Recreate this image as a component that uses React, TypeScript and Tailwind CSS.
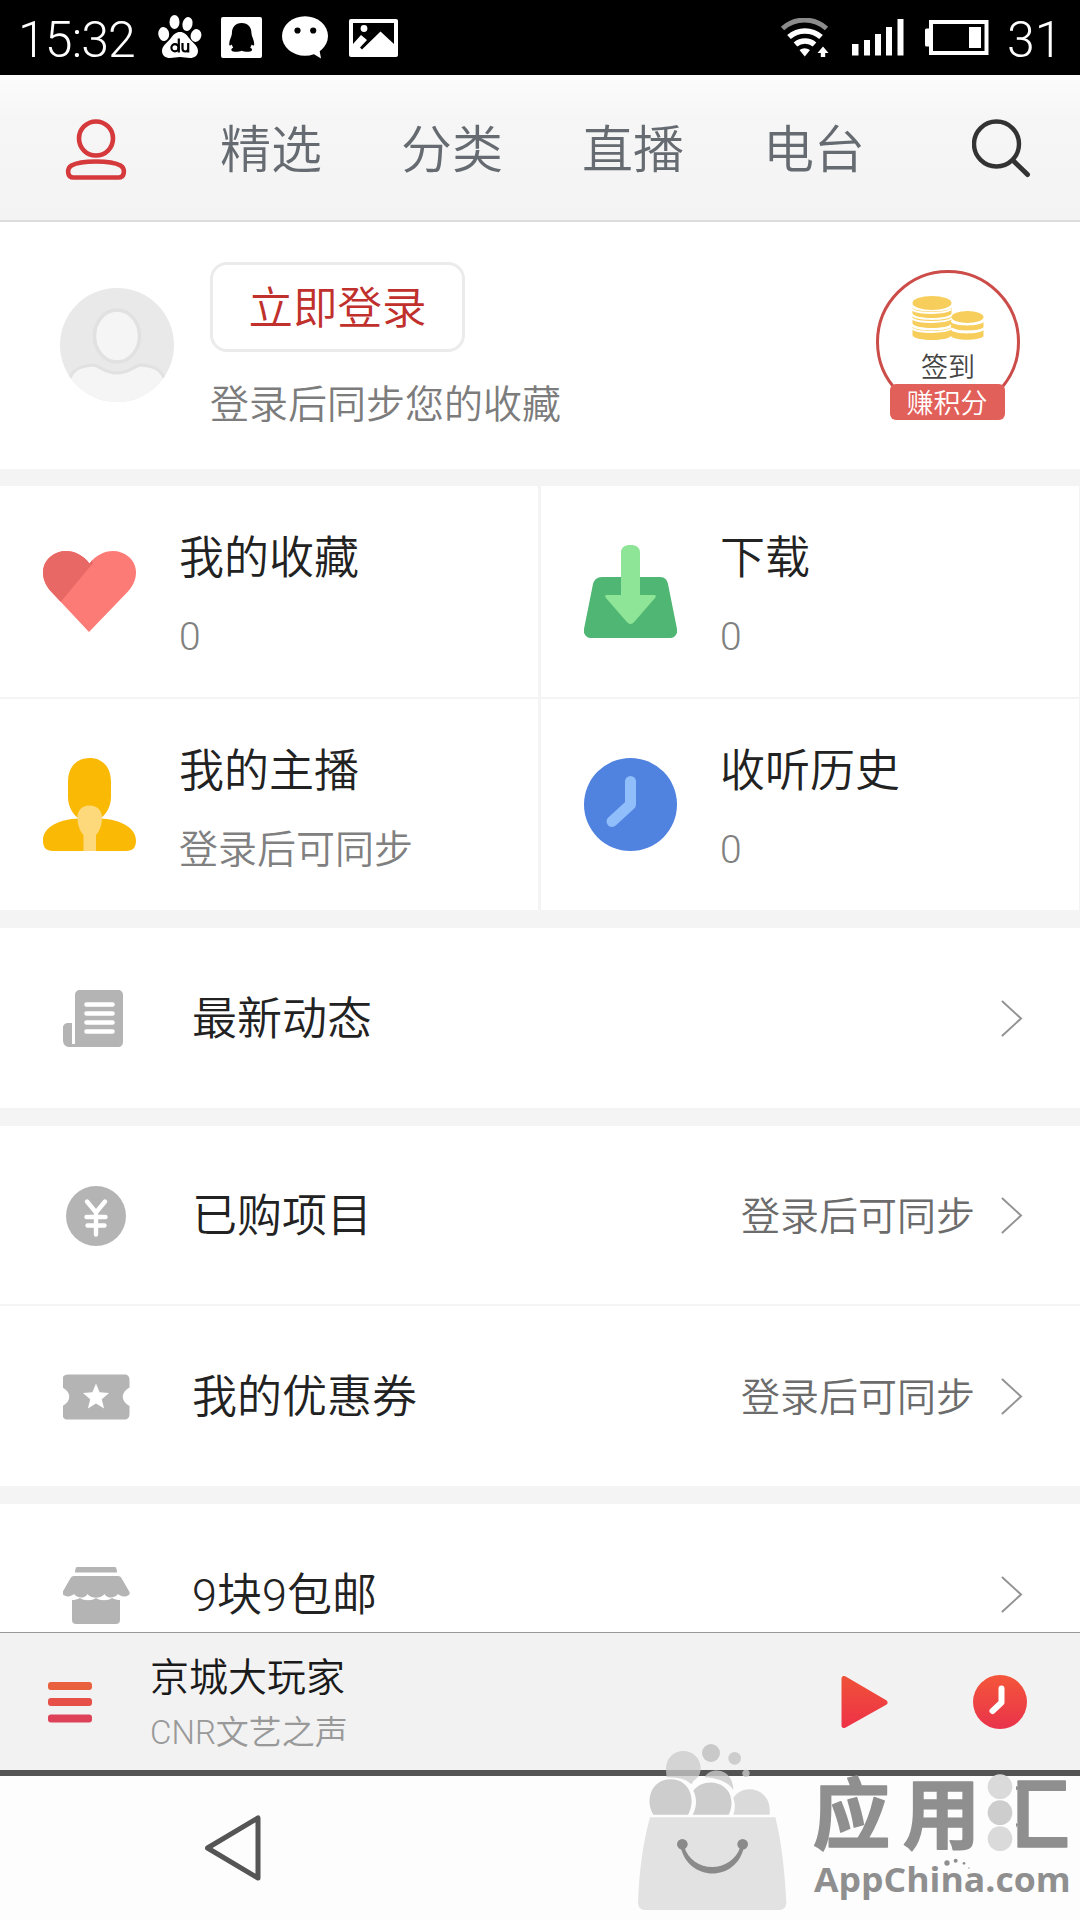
import React from "react";

const FONT = "font-['Roboto','Noto_Sans_CJK_SC',sans-serif]";

type IconProps = { box: string; className?: string; children: React.ReactNode };

/* Icon frame: the view box also gives the drawn size in pixels. */
function Icon({ box, className = "", children }: IconProps) {
  const [, , w, h] = box.split(" ");
  return (
    <svg viewBox={box} width={w} height={h} fill="none" className={`block shrink-0 ${className}`}>
      {children}
    </svg>
  );
}

function StatusBar() {
  return (
    <div className="flex h-[75px] shrink-0 items-start bg-black text-white">
      <span className="ml-[18px] mt-[15px] w-[130px] text-[50px] font-light leading-[50px] tracking-[-0.9px]">15:32</span>
      <Icon box="158 14 44 46" className="ml-[10px] mt-[14px]">
        <g fill="#fff">
          <ellipse cx="163.700" cy="34" rx="5.400" ry="7" transform="rotate(-8 163.700 34)" />
          <ellipse cx="174.500" cy="22" rx="5" ry="7" />
          <ellipse cx="187.500" cy="24" rx="5" ry="7" transform="rotate(14 187.500 24)" />
          <ellipse cx="196" cy="35.500" rx="5.300" ry="6.500" transform="rotate(14 196 35.500)" />
          <path d="M180 32c4 0 6.500 2.500 9 6 3 4 9 7.500 9 13 0 4.500-3.500 7-8 7-4 0-6-1-10-1s-6 1-10 1c-4.500 0-8-2.500-8-7 0-5.500 6-9 9-13 2.500-3.500 5-6 9-6z" />
        </g>
        <g stroke="#000" strokeWidth="2.200">
          <circle cx="175" cy="47.800" r="3.600" />
          <path d="M178.800 38.500v14M182.500 43v5.500c0 4 5.700 4 5.700 0V43v9.600" />
        </g>
      </Icon>
      <Icon box="221 17 41 41" className="ml-[19px] mt-[17px]">
        <rect x="221" y="17" width="41" height="41" rx="2" fill="#fff" />
        <path d="M241.700 23c6.500 0 9.800 4.500 9.800 10.500 0 3 2.700 6 2.700 10.500 0 2-1.200 2-2.500.5-.3 1.200-.8 2-1.500 3 1.500.8 2.500 2 1.500 3.200-1.500 1.500-7 1.300-10 0-3 1.300-8.500 1.500-10 0-1-1.200 0-2.400 1.500-3.200-.7-1-1.200-1.800-1.500-3-1.300 1.500-2.500 1.500-2.500-.5 0-4.500 2.700-7.500 2.700-10.500 0-6 3.300-10.500 9.800-10.500z" fill="#000" />
      </Icon>
      <Icon box="282 16 47 43" className="ml-[20px] mt-[16px]">
        <ellipse cx="305" cy="36" rx="23" ry="19.800" fill="#fff" />
        <path d="M312 53l9 5.500-1.500-8z" fill="#fff" />
        <circle cx="297.500" cy="30.500" r="3.100" fill="#000" />
        <circle cx="313.200" cy="30.500" r="3.100" fill="#000" />
      </Icon>
      <Icon box="349 19 49 38" className="ml-[20px] mt-[19px]">
        <rect x="349" y="19" width="49" height="38" rx="2" fill="#fff" />
        <path d="M353 23h41v21l-13.500-12.500-18.500 18-2-2 7-7.500-6-5-8 9z" fill="#000" />
        <circle cx="364" cy="28.500" r="3.400" fill="#fff" />
      </Icon>
      <Icon box="780 18 50 42" className="ml-auto mt-[18px]">
        <path d="M782.500 28.500a33 33 0 0 1 44 0" stroke="#8c8c8c" strokeWidth="5" />
        <path d="M789 37a24 24 0 0 1 32 0" stroke="#fff" strokeWidth="5.500" />
        <path d="M795.500 44.500a14.500 14.500 0 0 1 19 0" stroke="#fff" strokeWidth="5.500" />
        <path d="M799.500 50q5-3.500 10.500 0l-5.200 6.500z" fill="#fff" />
        <path d="M823 46.500l5.500 6.500h-3.300v4h-4.400v-4h-3.300z" fill="#fff" />
      </Icon>
      <Icon box="852 19 53 37" className="ml-[22px] mt-[19px]">
        <path d="M852 44h6.500v11.500H852zM864 40h6v15.500h-6zM875 34h6v21.500h-6zM886 27h6v28.500h-6zM897.500 19h6v36.500h-6z" fill="#fff" />
      </Icon>
      <Icon box="925 20 64 35" className="ml-[20px] mt-[20px]">
        <rect x="931" y="22" width="55.500" height="31" stroke="#fff" strokeWidth="4" />
        <rect x="925" y="28.500" width="6" height="18" rx="1.500" fill="#fff" />
        <rect x="969" y="27" width="12" height="21" fill="#fff" />
      </Icon>
      <span className="ml-[18px] mr-[17px] mt-[15px] w-[56px] text-[50px] font-light leading-[50px]">31</span>
    </div>
  );
}

const tabs = ["精选", "分类", "直播", "电台"];

function TopNav() {
  return (
    <div className="flex h-[147px] shrink-0 items-start border-b-2 border-[#dcdcdc] bg-linear-to-b from-[#fcfcfc] via-[#f6f6f6] via-30% to-[#f3f3f3]">
      <Icon box="65 118 62 63" className="ml-[65px] mt-[43px]">
        <circle cx="96" cy="138.500" r="17" stroke="#d5393c" strokeWidth="4.600" />
        <path d="M96 161.500c12 0 20 1.500 24.500 4 5 3 4.500 12-2 12h-45c-6.500 0-7-9-2-12 4.500-2.500 12.500-4 24.500-4z" stroke="#d5393c" strokeWidth="4.600" />
      </Icon>
      <div className="ml-[93px] mt-[44px] flex gap-[79px] text-[51px] font-[350] leading-[64px] text-[#656b70]">
        {tabs.map((t) => (
          <span key={t} className="w-[102px] whitespace-nowrap">{t}</span>
        ))}
      </div>
      <Icon box="972 119 60 60" className="ml-auto mr-[48px] mt-[44px]">
        <circle cx="996.500" cy="144" r="22.500" stroke="#333" strokeWidth="4.400" />
        <path d="M1013 160.500l14.500 14" stroke="#333" strokeWidth="5" strokeLinecap="round" />
      </Icon>
    </div>
  );
}

function Profile() {
  return (
    <div className="flex h-[247px] shrink-0 items-start bg-white">
      <Icon box="60 288 114 114" className="ml-[60px] mt-[66px]">
        <clipPath id="avatar"><circle cx="117" cy="345" r="57" /></clipPath>
        <g clipPath="url(#avatar)">
          <rect x="60" y="288" width="114" height="114" fill="#e9e9e9" />
          <path d="M66 392c3-22 12-26 27-27 6 0 11 8 24 8s18-8 24-8c15 1 24 5 27 27l-6 16H72z" fill="#f5f5f5" stroke="#e1e1e1" strokeWidth="3" />
          <ellipse cx="117" cy="336" rx="22.500" ry="26" fill="#f5f5f5" stroke="#e1e1e1" strokeWidth="3.500" />
        </g>
      </Icon>
      <div className="ml-[36px] mt-[40px] flex flex-col items-start">
        <button className="h-[90px] w-[255px] rounded-[17px] border-3 border-[#ebebeb] pt-[2px] text-[44.500px] font-[350] leading-[84px] text-[#c0302c]">
          立即登录
        </button>
        <p className="mt-[27px] text-[39px] font-[350] leading-[52px] text-[#7c7c7c]">登录后同步您的收藏</p>
      </div>
      <div className="ml-auto mr-[60px] mt-[48px] flex w-[144px] flex-col items-center">
        <div className="flex h-[144px] w-[144px] flex-col items-center rounded-full border-3 border-[#cb4c48]">
          <Icon box="912 296 72 45" className="mt-[23px]">
            <g fill="#f7ce5b">
              <path d="M912.500 327c4 4.500 35 4.500 39 0v8.500c-3 6-36 6-39 0z" />
              <path d="M912.500 316.500c4 4.500 35 4.500 39 0v7c-3 6-36 6-39 0z" />
              <path d="M912.500 308c4 4.500 35 4.500 39 0v5.500c-3 6-36 6-39 0z" />
              <ellipse cx="932" cy="303" rx="19.500" ry="7" />
              <path d="M951 330c3 4.500 29 4.500 32.500 0v6c-3 5-29.500 5-32.500 0z" />
              <path d="M951 322c3 4.500 29 4.500 32.500 0v5c-3 5-29.500 5-32.500 0z" />
              <ellipse cx="967.500" cy="317" rx="16" ry="6" />
            </g>
            <g stroke="#fff" strokeWidth="2">
              <path d="M912 309.500c7 4.500 32 4.500 39 0M912 318.500c7 4.500 32 4.500 40 0M912 328.500c7 4.500 32 4.500 40 0M951.500 321c6 4 26 4 32 0M952 328.500c6 4 26 4 32 0" />
            </g>
          </Icon>
          <span className="mt-[9px] text-[27px] font-[350] leading-[36px] text-[#444]">签到</span>
        </div>
        <span className="relative -mt-[30px] mr-[2px] h-[36px] w-[115px] rounded-[6px] bg-[#e2605a] text-center text-[27px] font-[350] leading-[40px] text-white">赚积分</span>
      </div>
    </div>
  );
}

const HeartIcon = () => (
  <Icon box="43 545 93 93">
    <clipPath id="heart"><path d="M89 632L51 591.500c-11-12-10-27-1-34.500 12-10 29-7 39.500 6.500 10.500-13.500 27.500-16.500 39.500-6.500 9 7.500 10 22.500-1 34.500z" /></clipPath>
    <g clipPath="url(#heart)">
      <rect x="40" y="545" width="100" height="93" fill="#fd7b76" />
      <path d="M40 545h45l8 18-31.500 38L40 610z" fill="#e86865" />
    </g>
  </Icon>
);

const HostIcon = () => (
  <Icon box="43 758 93 93">
    <path d="M89.500 758c13 0 21.500 9 21.500 24v15c0 11-6 18.500-11 21.500 18 .5 36 8 36 22 0 7-3 10.500-10 10.500H53c-7 0-10-3.500-10-10.500 0-14 17-21.500 36-22-5-3-11-10.500-11-21.500v-15c0-15 8.500-24 21.500-24z" fill="#f9b905" />
    <path d="M89.500 805.500c8 0 12.500 5 12.500 12 0 8-3 14.500-6 17.500v16H83.500v-16c-3-3-6-9.500-6-17.500 0-7 4-12 12-12z" fill="#fed97c" />
  </Icon>
);

const DownloadIcon = () => (
  <Icon box="584 545 93 93">
    <path d="M602 577h58c5 0 7 3 8 7l9 45c.8 5-2 9-8 9h-77c-6 0-8.800-4-8-9l9-45c1-4 4-7 9-7z" fill="#4fb673" />
    <path d="M630.500 545c6 0 9.500 2.500 9.500 7.500V595h14c2 0 2.500 1 1 3l-20 23c-3 4-6 4-9 0l-20-23c-1.500-2-1-3 1-3h14v-42.500c0-5 3.500-7.500 9.500-7.500z" fill="#8fe597" />
  </Icon>
);

const HistoryIcon = () => (
  <Icon box="584 758 93 93">
    <circle cx="630.500" cy="804.500" r="46.500" fill="#5082e0" />
    <path d="M630.500 781.500v23L612 821.500" stroke="#8fbefb" strokeWidth="11" strokeLinecap="round" strokeLinejoin="round" />
  </Icon>
);

const tiles = [
  { title: "我的收藏", sub: "0", icon: <HeartIcon /> },
  { title: "下载", sub: "0", icon: <DownloadIcon /> },
  { title: "我的主播", sub: "登录后可同步", icon: <HostIcon /> },
  { title: "收听历史", sub: "0", icon: <HistoryIcon /> },
];

function Tiles() {
  return (
    <div className="grid shrink-0 grid-cols-[538px_538px] gap-x-[3px] gap-y-[2px] bg-[#f4f4f4]">
      {tiles.map((t) => (
        <div key={t.title} className="flex h-[211px] items-start bg-white pl-[43px] pt-[43px]">
          <div className="mt-[16px]">{t.icon}</div>
          <div className="ml-[43px] font-[350]">
            <div className="text-[45px] leading-[60px] text-[#222]">{t.title}</div>
            <div className="mt-[22px] text-[39px] leading-[52px] text-[#808080]">{t.sub}</div>
          </div>
        </div>
      ))}
    </div>
  );
}

const NewsIcon = () => (
  <Icon box="63 991 60 57">
    <path d="M80 991h38c3 0 5 2 5 5v47c0 3-2 5-5 5H70c-4.500 0-7-2.500-7-7v-12c0-3.500 2-5 5.500-5H72v21h3V996c0-3 2-5 5-5z" fill="#b4b4b4" />
    <path d="M86.500 1005.500h26M86.500 1014.500h26M86.500 1023.500h26M86.500 1032.500h26" stroke="#fff" strokeWidth="4.600" strokeLinecap="round" />
  </Icon>
);

const YenIcon = () => (
  <Icon box="66 1186 60 60">
    <circle cx="96" cy="1216" r="30" fill="#b4b4b4" />
    <path d="M87 1201.500l9 11 9-11M96 1212.500v22M86.500 1217h19M87.500 1225.500h17" stroke="#fff" strokeWidth="4.400" strokeLinecap="round" />
  </Icon>
);

const CouponIcon = () => (
  <Icon box="63 1373 67 46">
    <path d="M68 1373.500h56c4 0 5.500 2 5.500 5.500v7.500c-9 4.500-9 14 0 18.500v8c0 3.500-1.500 5.500-5.500 5.500H68c-4 0-5.500-2-5.500-5.500v-8c9-4.500 9-14 0-18.500v-7.500c0-3.500 1.500-5.500 5.500-5.500z" fill="#b4b4b4" />
    <path d="M96 1382.500l3.600 8.800 9.400.7-7.200 6.200 2.300 9.300-8.100-5-8.100 5 2.300-9.300-7.200-6.200 9.400-.7z" fill="#fff" />
  </Icon>
);

const ShopIcon = () => (
  <Icon box="63 1566 67 58">
    <g fill="#b4b4b4">
      <path d="M77 1567h38c1 0 2 2 2 5.500H75c0-3.500 1-5.500 2-5.500z" />
      <path d="M74 1576h44c2 0 3 1 4 3l7.500 13c1.500 4-7 6.500-11.500 2-3 4-10 5.500-13.500 0-4 5-13 5-17 0-3.500 5.500-10.500 4-13.500 0-4.500 4.500-13 2-11.500-2l7.500-13c1-2 2-3 4-3z" />
      <path d="M72 1600c3 0 5-.5 8-2 4 3 12 3 16 0 4 3 12 3 16 0 3 1.500 5 2 8 2v20c0 2.500-1.500 4-4 4H76c-2.500 0-4-1.500-4-4z" />
    </g>
  </Icon>
);

type RowProps = { icon: React.ReactNode; title: string; note?: string; className?: string };

function Row({ icon, title, note, className = "" }: RowProps) {
  return (
    <div className={`flex h-[180px] shrink-0 items-center bg-white font-[350] ${className}`}>
      <div className="ml-[63px] w-[129px] pt-px">{icon}</div>
      <span className="pt-[3px] text-[45px] leading-[60px] text-[#222]">{title}</span>
      <span className="ml-auto pt-[3px] text-[39px] leading-[52px] text-[#6c6c6c]">{note}</span>
      <Icon box="1000 1000 24 37" className="ml-[25px] mr-[56px]">
        <path d="M1002.500 1001.500l18.500 17-18.500 17" stroke="#939393" strokeWidth="2" strokeLinecap="round" />
      </Icon>
    </div>
  );
}

function Player() {
  return (
    <div className="flex h-[138px] shrink-0 items-start border-t border-[#9a9a9a] bg-[#f2f2f2]">
      <Icon box="48 1682 44 41" className="ml-[48px] mt-[49px]">
        <rect x="48" y="1682" width="44" height="8" rx="3" fill="#e9603f" />
        <rect x="48" y="1698" width="44" height="8" rx="3" fill="#e65048" />
        <rect x="48" y="1714.500" width="44" height="8" rx="3" fill="#dd4258" />
      </Icon>
      <div className="ml-[58px] mt-[20px] font-[350]">
        <div className="text-[39px] leading-[50px] text-[#1a1a1a]">京城大玩家</div>
        <div className="mt-[8px] text-[33px] leading-[44px] text-[#999]">CNR文艺之声</div>
      </div>
      <Icon box="841 1675 48 54" className="ml-auto mt-[42px]">
        <linearGradient id="play" x1="0" y1="0" x2="0" y2="1">
          <stop offset="0" stopColor="#ef5039" />
          <stop offset="1" stopColor="#ee3347" />
        </linearGradient>
        <path d="M844 1678.500v47l41-23z" fill="url(#play)" stroke="url(#play)" strokeWidth="5" strokeLinejoin="round" />
      </Icon>
      <Icon box="973 1675 54 54" className="ml-[84px] mr-[53px] mt-[42px]">
        <linearGradient id="timer" x1="0" y1="0" x2="0" y2="1">
          <stop offset="0" stopColor="#f4563a" />
          <stop offset="1" stopColor="#e9334b" />
        </linearGradient>
        <circle cx="1000" cy="1702" r="27" fill="url(#timer)" />
        <path d="M1001.500 1688.500v14l-9 8.500" stroke="#fff" strokeWidth="6" strokeLinecap="round" strokeLinejoin="round" />
      </Icon>
    </div>
  );
}

function Watermark() {
  return (
    <svg viewBox="0 420 1440 540" width="480" height="180" className="absolute bottom-0 right-0">
      <g fill="#c9c9c9">
        <path d="M198 505a52 52 0 1 1 104 0q0 18-10 28-12 8-18 20-20-22-74-21-2-14-2-27z" opacity=".75" />
        <circle cx="333" cy="459" r="27" />
        <circle cx="404" cy="475" r="19" opacity=".9" />
        <circle cx="438" cy="520" r="11" opacity=".8" />
        <path d="M314 532c14-32 84-32 86 38-16-26-50-36-86-38z" opacity=".8" />
      </g>
      <path d="M160 644c-26-40-8-106 52-106s76 66 52 106z" fill="#cdcdcd" />
      <path d="M278 644c12-20 14-50 2-72 30-42 110-30 114 30 2 16-2 30-8 42z" fill="#cdcdcd" />
      <path d="M400 644c6-18 6-34 0-50 26-44 104-32 109 30v20z" fill="#dadada" />
      <path d="M150 652H526C546 730 554 820 559 908q0 22-24 22H138q-24 0-24-22C117 820 128 730 150 652z" fill="#e2e2e2" />
      <g fill="#8a8a8a">
        <circle cx="247" cy="733" r="16" />
        <circle cx="428" cy="733" r="16" />
        <path d="M242 740c22 106 168 108 190 0l-10-2c-26 84-146 84-170 0z" />
      </g>
      <g className="font-['Noto_Sans_CJK_SC',sans-serif] text-[232px] font-bold" fill="#8f8f8f" stroke="#8f8f8f" strokeWidth="5" strokeLinejoin="round">
        <clipPath id="hui"><rect x="1248" y="500" width="192" height="280" /></clipPath>
        <text x="638" y="730" textLength="502" lengthAdjust="spacing">应用</text>
        <text x="1176" y="730" clipPath="url(#hui)">汇</text>
      </g>
      <circle cx="1200" cy="560" r="37" fill="#dadada" />
      <circle cx="1200" cy="638" r="37" fill="#cdcdcd" />
      <circle cx="1200" cy="716" r="37" fill="#dadada" />
      <g fill="#8f8f8f">
        <text x="642" y="876" textLength="770" lengthAdjust="spacingAndGlyphs" className="font-['Open_Sans',sans-serif] text-[101px] font-bold">AppChina.com</text>
        <circle cx="1041" cy="789" r="8" />
        <circle cx="1067" cy="782" r="6" />
        <circle cx="1092" cy="790" r="4" />
        <circle cx="1107" cy="804" r="2" />
      </g>
    </svg>
  );
}

export default function App() {
  return (
    <div className={`relative flex h-[1920px] w-[1080px] flex-col overflow-hidden bg-[#f4f4f4] ${FONT}`}>
      <StatusBar />
      <TopNav />
      <main className="flex h-[1410px] shrink-0 flex-col gap-[17px] overflow-hidden">
        <Profile />
        <Tiles />
        <Row icon={<NewsIcon />} title="最新动态" className="mt-px" />
        <div className="mt-px flex shrink-0 flex-col gap-[2px]">
          <Row icon={<div className="pl-[3px]"><YenIcon /></div>} title="已购项目" note="登录后可同步" className="h-[178px]!" />
          <Row icon={<CouponIcon />} title="我的优惠券" note="登录后可同步" />
        </div>
        <Row icon={<ShopIcon />} title="9块9包邮" className="mt-px" />
      </main>
      <Player />
      <div className="flex h-[150px] shrink-0 items-start border-t-[6px] border-[#545454] bg-[#fdfdfd]">
        <Icon box="202 1814 60 68" className="ml-[203px] mt-[38px]">
          <path d="M206.500 1848L257 1818v60z" stroke="#555" strokeWidth="5" strokeLinejoin="round" />
        </Icon>
      </div>
      <Watermark />
    </div>
  );
}
